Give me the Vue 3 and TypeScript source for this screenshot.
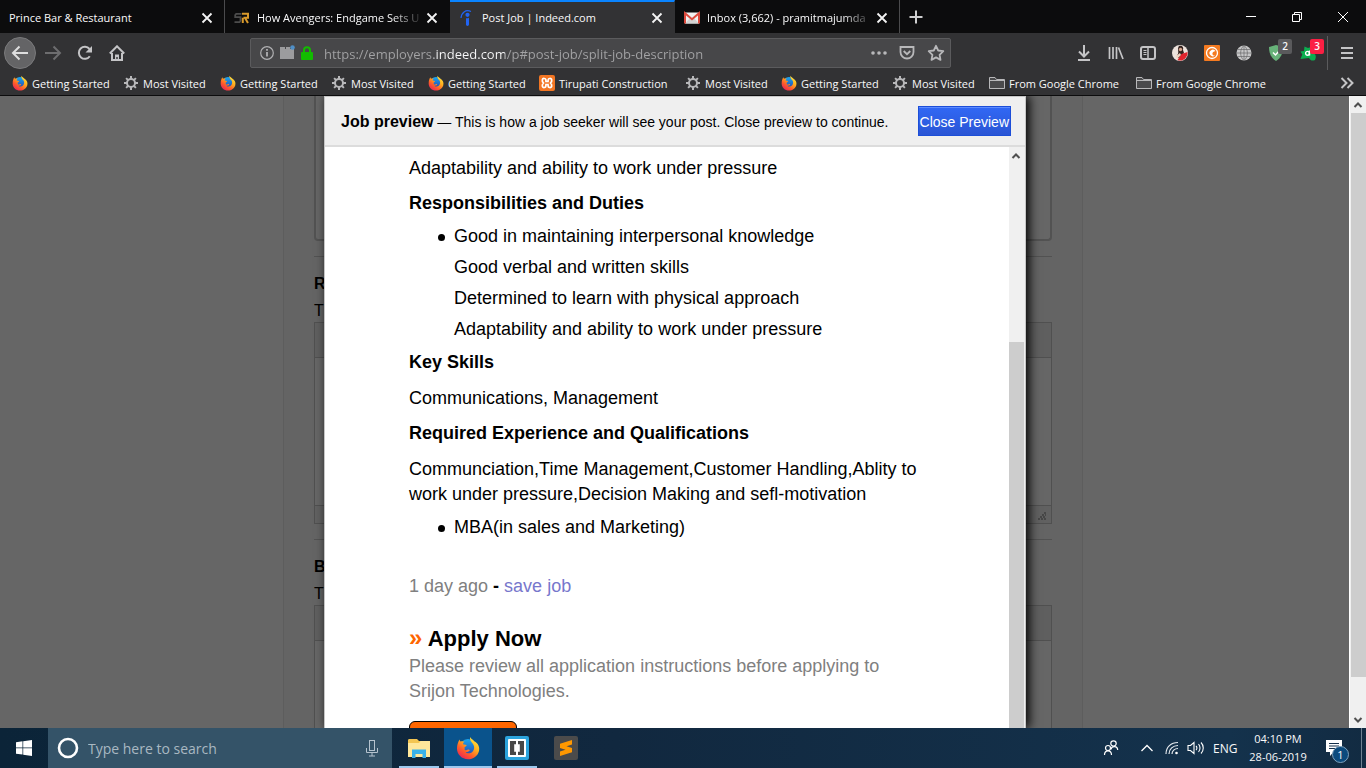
<script setup lang="ts">
import { ref } from 'vue'

interface Tab {
  title: string
  icon?: string
  active?: boolean
  fade?: boolean
}

interface Bookmark {
  label: string
  icon: string
}

interface Task {
  name: string
  icon: string
  state: 'idle' | 'open' | 'current'
}

const tabs: Tab[] = [
  { title: 'Prince Bar & Restaurant' },
  { title: 'How Avengers: Endgame Sets U', icon: 'i-sr', fade: true },
  { title: 'Post Job | Indeed.com', icon: 'i-indeed', active: true },
  { title: 'Inbox (3,662) - pramitmajumda', icon: 'i-gmail', fade: true },
]

const bookmarks: Bookmark[] = [
  { label: 'Getting Started', icon: 'i-firefox' },
  { label: 'Most Visited', icon: 'i-gear' },
  { label: 'Getting Started', icon: 'i-firefox' },
  { label: 'Most Visited', icon: 'i-gear' },
  { label: 'Getting Started', icon: 'i-firefox' },
  { label: 'Tirupati Construction', icon: 'i-xampp' },
  { label: 'Most Visited', icon: 'i-gear' },
  { label: 'Getting Started', icon: 'i-firefox' },
  { label: 'Most Visited', icon: 'i-gear' },
  { label: 'From Google Chrome', icon: 'i-folder' },
  { label: 'From Google Chrome', icon: 'i-folder' },
]

const tasks: Task[] = [
  { name: 'File Explorer', icon: 'i-explorer', state: 'open' },
  { name: 'Firefox', icon: 'i-firefox', state: 'current' },
  { name: 'Brackets', icon: 'i-brackets', state: 'open' },
  { name: 'Sublime Text', icon: 'i-sublime', state: 'idle' },
]

const duties: string[] = [
  'Good in maintaining interpersonal knowledge',
  'Good verbal and written skills',
  'Determined to learn with physical approach',
  'Adaptability and ability to work under pressure',
]

const address = ref('https://employers.indeed.com/p#post-job/split-job-description')
const search = ref('')
</script>

<template>
  <div class="screen">
    <svg class="sprite" width="0" height="0" aria-hidden="true">
      <defs>
        <linearGradient id="g-fox" x1="0.9" y1="0" x2="0.2" y2="1">
          <stop offset="0" stop-color="#fff14a" />
          <stop offset="0.4" stop-color="#ffb01e" />
          <stop offset="0.7" stop-color="#ff5a2a" />
          <stop offset="1" stop-color="#e6205e" />
        </linearGradient>
        <linearGradient id="g-globe" x1="0" y1="0" x2="0" y2="1">
          <stop offset="0" stop-color="#19a7f0" />
          <stop offset="1" stop-color="#2a3fa8" />
        </linearGradient>
      </defs>
      <symbol id="i-firefox" viewBox="0 0 24 24">
        <circle cx="12" cy="12" r="9" fill="url(#g-globe)" />
        <path fill="url(#g-fox)" d="M14 1c1 1.700 3 2.600 4.200 4.200C22 7 24 11 23 15c-1.200 5-5.800 8.300-11 8.300C5.800 23.300 1 18.600 1 12.600 1 9 2 6 3.500 3.500c.3 1 .6 1.500 1 2C6 5 7.200 5 8.500 5.800c-1 .6-1.500 1.500-1.500 2.500l3.500.6c.3 1-1 1.600-2 2.300.2 1 .2 1.800.1 2.500.9.800 1.900.6 2.900.1 1-.4 2-.2 2.300.5-.8 1.500-2.500 2-4.300 1.700 1.600 1.800 5 1.700 7-.3 2-2 2.300-5.200.5-7.700C15.500 6 13.400 4 14 1z" />
      </symbol>
      <symbol id="i-gear" viewBox="0 0 16 16">
        <g stroke="#b8b8ba" stroke-width="2">
          <path d="M8 1v3M8 12v3M1 8h3M12 8h3M3.100 3.100l2 2M10.900 10.900l2 2M12.900 3.100l-2 2M5.100 10.900l-2 2" />
          <circle cx="8" cy="8" r="4" fill="none" />
        </g>
      </symbol>
      <symbol id="i-xampp" viewBox="0 0 16 16">
        <rect width="16" height="16" rx="2" fill="#f37623" />
        <path d="M5.500 3.500C3 3 2.500 6 4.500 8c-2 2-1.500 5 1 4.500 1.500 0 1.500-1.500 1.500-3h2c0 1.500 0 3 1.500 3 2.500.5 3-2.500 1-4.500 2-2 1.500-5-1-4.500C9 3.500 9 5 9 6.500H7c0-1.500 0-3-1.500-3z" fill="none" stroke="#fff" stroke-width="1.700" />
      </symbol>
      <symbol id="i-folder" viewBox="0 0 16 16">
        <path d="M.5 13.500v-11h5.500l1.500 2h8v9z" fill="#4a4a4c" stroke="#b8b8ba" />
        <path d="M.5 5.500h15" stroke="#b8b8ba" />
      </symbol>
      <symbol id="i-sr" viewBox="0 0 16 16">
        <path d="M7.500 3.800H2.200L1.200 5v2.200h5.300v3.600l-1 1.400H.5" fill="none" stroke="#4c4c4c" stroke-width="1.800" />
        <path d="M8 3.800h6v4H9.500M8.800 13V7.800M11 8l3 5" fill="none" stroke="#d99a2b" stroke-width="2" />
      </symbol>
      <symbol id="i-indeed" viewBox="0 0 16 16">
        <circle cx="8.500" cy="4.800" r="2.100" fill="#2164f3" />
        <path d="M7 8.200c1.200.3 2 .1 3-.4V14.500c0 1.900-3 1.900-3 0z" fill="#2164f3" />
        <path d="M2 8C2.300 3 6.500-1 12 1.500" fill="none" stroke="#2164f3" stroke-width="1.200" />
      </symbol>
      <symbol id="i-gmail" viewBox="0 0 16 16">
        <path d="M1 2.500h14v11H1z" fill="#f1f1f1" />
        <path d="M1 13.500L6 8l2 1.500L10 8l5 5.500z" fill="#d4d4d4" />
        <path d="M1 13.500V3.200l7 6 7-6v10.300" fill="none" stroke="#dc4a3d" stroke-width="2" />
      </symbol>
      <symbol id="i-explorer" viewBox="0 0 24 24">
        <path d="M1 4.500C1 3.500 1.500 3 2.500 3H10l2 2h10v16H1z" fill="#f3c552" />
        <path d="M1 7h11l1.500-2H23v16H1z" fill="#ffe79b" />
        <path d="M5 22v-8.500h14V22h-3.500v-4h-7v4z" fill="#38b1ea" />
      </symbol>
      <symbol id="i-brackets" viewBox="0 0 24 24">
        <rect width="24" height="24" rx="2" fill="#2ba3dd" />
        <rect x="3" y="3" width="18" height="18" rx="1" fill="#fff" />
        <path d="M11 5v3.200H9.200v7.600H11V19H5V5zM13 5v3.200h1.800v7.600H13V19h6V5z" fill="#474747" />
      </symbol>
      <symbol id="i-sublime" viewBox="0 0 24 24">
        <rect width="24" height="24" rx="2" fill="#4b4b4b" />
        <path d="M18 4v4.500l-5.500 1.800 5.500 1.800v4.200L6 20v-4.500l5.500-1.800L6 11.900V7.700z" fill="#ff9800" />
      </symbol>
    </svg>

    <header class="browser">
      <div class="tabstrip">
        <div v-for="tab in tabs" :key="tab.title" class="tab" :class="{ active: tab.active }">
          <svg v-if="tab.icon" class="ico16"><use :href="`#${tab.icon}`" /></svg>
          <span class="tab-title" :class="{ fade: tab.fade }">{{ tab.title }}</span>
          <button class="tab-close" type="button" aria-label="Close tab">
            <svg width="12" height="12" viewBox="0 0 12 12"><path d="M1.500 1.500l9 9M10.500 1.500l-9 9" stroke="#f4f4f4" stroke-width="1.800" /></svg>
          </button>
        </div>
        <button class="new-tab" type="button" aria-label="New tab">
          <svg width="16" height="16" viewBox="0 0 16 16"><path d="M8 1.500v13M1.500 8h13" stroke="#cfcfd0" stroke-width="2" /></svg>
        </button>
        <div class="window-buttons">
          <button type="button" aria-label="Minimize"><svg width="12" height="12" viewBox="0 0 12 12"><path d="M1 5.500h10" stroke="#fff" /></svg></button>
          <button type="button" aria-label="Restore"><svg width="12" height="12" viewBox="0 0 12 12" fill="none" stroke="#fff"><path d="M1.500 3.500h7v7h-7zM3.500 3.500v-2h7v7h-2" /></svg></button>
          <button type="button" aria-label="Close"><svg width="12" height="12" viewBox="0 0 12 12"><path d="M1 1l10 10M11 1L1 11" stroke="#fff" /></svg></button>
        </div>
      </div>

      <div class="toolbar">
        <nav class="nav-buttons">
          <button class="back" type="button" aria-label="Back">
            <svg width="18" height="18" viewBox="0 0 18 18"><path d="M17 9H2M8.500 2.500L2 9l6.500 6.500" fill="none" stroke="#dededf" stroke-width="2" /></svg>
          </button>
          <button type="button" aria-label="Forward">
            <svg width="18" height="18" viewBox="0 0 18 18"><path d="M1 9h15M9.500 2.500L16 9l-6.500 6.500" fill="none" stroke="#6d6d6f" stroke-width="2" /></svg>
          </button>
          <button type="button" aria-label="Reload">
            <svg width="16" height="16" viewBox="0 0 16 16"><path d="M12.800 11.200A6 6 0 1 1 12.500 4" fill="none" stroke="#c4c4c6" stroke-width="2" /><path d="M15 1v6.500H8.500z" fill="#c4c4c6" /></svg>
          </button>
          <button type="button" aria-label="Home">
            <svg width="16" height="16" viewBox="0 0 16 16"><path d="M.8 8.500L8 1.300l7.200 7.200M3 8v7h10V8" fill="none" stroke="#c4c4c6" stroke-width="2" /><path d="M6 15V9.500h4V15H8.700v-3H7.300v3z" fill="#c4c4c6" /></svg>
          </button>
        </nav>

        <div class="urlbar">
          <svg width="16" height="16" viewBox="0 0 16 16"><circle cx="8" cy="8" r="6.300" fill="none" stroke="#b0b0b2" stroke-width="1.200" /><path d="M8 7v4.500M8 4v1.700" stroke="#b0b0b2" stroke-width="1.800" /></svg>
          <svg width="16" height="16" viewBox="0 0 16 16"><path d="M1 2h5v2H1zM7 2h4v2H7zM1 4h14v10H1z" fill="#9c9c9e" /><circle cx="13.500" cy="2.500" r="2.300" fill="#4f8fc7" /></svg>
          <svg width="16" height="16" viewBox="0 0 16 16"><path d="M5 8V5.200a3 3 0 0 1 6 0V8" fill="none" stroke="#12bc00" stroke-width="2" /><rect x="2" y="7" width="12" height="8" rx="1" fill="#12bc00" /></svg>
          <input v-model="address" class="address" type="text" aria-label="Address" spellcheck="false" />
          <svg width="16" height="16" viewBox="0 0 16 16" fill="#b8b8ba"><circle cx="2" cy="8" r="1.800" /><circle cx="8" cy="8" r="1.800" /><circle cx="14" cy="8" r="1.800" /></svg>
          <svg width="16" height="16" viewBox="0 0 16 16" fill="none" stroke="#b8b8ba" stroke-width="1.800"><path d="M1.500 2h13v5a6.500 6.500 0 0 1-13 0zM4.700 6L8 9.200 11.300 6" /></svg>
          <svg width="18" height="18" viewBox="0 0 18 18"><path d="M9 1.800l2.200 4.700 5.100.7-3.700 3.600.9 5.100L9 13.400l-4.500 2.500.9-5.100L1.700 7.200l5.100-.7z" fill="none" stroke="#b8b8ba" stroke-width="1.800" stroke-linejoin="round" /></svg>
        </div>

        <div class="extensions">
          <button type="button" aria-label="Downloads"><svg width="16" height="16" viewBox="0 0 16 16"><path d="M8 0v11M3 6.500l5 5 5-5M2 15h12" fill="none" stroke="#c4c4c6" stroke-width="2" /></svg></button>
          <button type="button" aria-label="Library"><svg width="16" height="16" viewBox="0 0 16 16"><path d="M1.500 2v12M5 2v12M8.500 2v12M10.500 2.500l4.500 11.500" stroke="#c4c4c6" stroke-width="1.700" /></svg></button>
          <button type="button" aria-label="Sidebars"><svg width="16" height="16" viewBox="0 0 16 16" fill="none" stroke="#c4c4c6"><rect x="1" y="2" width="14" height="12" rx="2" stroke-width="2" /><path d="M8 2v12" stroke-width="1.500" /><path d="M3.500 5.500h3M3.500 7.500h3M3.500 9.500h3" /></svg></button>
          <button type="button" aria-label="Account"><svg width="16" height="16" viewBox="0 0 16 16"><circle cx="8" cy="8" r="8" fill="#ece2dc" /><path d="M7 1c3-1 5 1 4 4l1 3-5 5C5 13 4 11 6 9c1-3-1-5 1-8z" fill="#33231f" /><circle cx="8.500" cy="4.500" r="1.700" fill="#d6a58d" /><path d="M5.500 15l4-6 6-2c.8 5-5 10.500-10 8z" fill="#e0242d" /><path d="M4 11l4-3 1 2-4 4z" fill="#f1d4c2" /></svg></button>
          <button type="button" aria-label="Capture"><svg width="16" height="16" viewBox="0 0 16 16"><rect width="16" height="16" rx="1" fill="#f47a20" /><circle cx="8" cy="8" r="5.500" fill="none" stroke="#fff" stroke-width="1.300" /><path d="M11.500 6A3.300 3.300 0 1 0 11 10.500C8 11 7 7 11.500 6z" fill="#fff" /></svg></button>
          <button type="button" aria-label="Globe"><svg width="16" height="16" viewBox="0 0 16 16"><circle cx="8" cy="8" r="7.500" fill="#c6c6c7" /><path d="M0 8h16M1.500 4.500h13M1.500 11.500h13M8 0v16M8 .5C3.500 4 3.500 12 8 15.500M8 .5c4.500 3.500 4.500 11.500 0 15" fill="none" stroke="#68686a" stroke-width=".7" /></svg></button>
          <button class="badged" type="button" aria-label="Ad blocker"><svg width="16" height="16" viewBox="0 0 16 16"><path d="M8 0l7 2c0 6-2 11-7 14C3 13 1 8 1 2z" fill="#67b279" /><path d="M5 7.500L7.500 10l4-4.500" fill="none" stroke="#fff" stroke-width="1.500" /></svg><span class="badge">2</span></button>
          <button class="badged" type="button" aria-label="Online security"><svg width="16" height="16" viewBox="0 0 16 16"><path d="M4.500 1.500L8 3l3-1 2 6c3 1 3.500 4 2 7-3 1.500-5 0-6-2L.5 14l1.800-4.500L.5 6.500l3.500-.5z" fill="#0aae4f" /><path d="M9.500 5.500v5" stroke="#fff" stroke-width="1.500" /><circle cx="7.500" cy="8.300" r="1.900" fill="none" stroke="#fff" stroke-width="1.400" /></svg><span class="badge alert">3</span></button>
          <button class="menu" type="button" aria-label="Menu"><svg width="16" height="16" viewBox="0 0 16 16"><path d="M2 3h12M2 8h12M2 13h12" stroke="#c4c4c6" stroke-width="2" /></svg></button>
        </div>
      </div>

      <nav class="bookmarks">
        <a v-for="(mark, i) in bookmarks" :key="i" href="#">
          <svg class="ico16"><use :href="`#${mark.icon}`" /></svg>
          <span>{{ mark.label }}</span>
        </a>
        <button class="more" type="button" aria-label="More bookmarks">
          <svg width="14" height="12" viewBox="0 0 14 12"><path d="M1.500 1l5 5-5 5M7.500 1l5 5-5 5" fill="none" stroke="#c4c4c6" stroke-width="2" /></svg>
        </button>
      </nav>
    </header>

    <main class="viewport">
      <div class="page">
        <div class="page-inner">
          <div class="field"></div>
          <section class="block">
            <h2>R</h2>
            <p>T</p>
            <div class="editor">
              <div class="editor-tools"></div>
              <div class="editor-text"></div>
              <div class="editor-status">
                <svg width="8" height="8" viewBox="0 0 8 8"><path d="M6 1h2M4 3h4M2 5h6M0 7h8" stroke="#2e2e2e" stroke-dasharray="2 1" /></svg>
              </div>
            </div>
          </section>
          <section class="block">
            <h2>B</h2>
            <p>T</p>
            <div class="editor">
              <div class="editor-tools"></div>
              <div class="editor-text"></div>
            </div>
          </section>
        </div>
      </div>

      <div class="overlay">
        <div class="dialog" role="dialog" aria-label="Job preview">
          <div class="dialog-head">
            <p><b>Job preview</b> — This is how a job seeker will see your post. Close preview to continue.</p>
            <button class="close-preview" type="button">Close Preview</button>
          </div>
          <div class="dialog-body">
            <article class="job">
              <p>Adaptability and ability to work under pressure</p>
              <h3>Responsibilities and Duties</h3>
              <ul>
                <li v-for="(duty, i) in duties" :key="duty" :class="{ bullet: i === 0 }">{{ duty }}</li>
              </ul>
              <h3>Key Skills</h3>
              <p>Communications, Management</p>
              <h3>Required Experience and Qualifications</h3>
              <p>Communciation,Time Management,Customer Handling,Ablity to work under pressure,Decision Making and sefl-motivation</p>
              <ul>
                <li class="bullet">MBA(in sales and Marketing)</li>
              </ul>
              <p class="posted"><span>1 day ago</span> <b>-</b> <a href="#">save job</a></p>
              <h2><span>»</span> Apply Now</h2>
              <p class="note">Please review all application instructions before applying to Srijon Technologies.</p>
              <button class="apply" type="button" aria-label="Apply"></button>
            </article>
            <div class="scrollbar inner-bar">
              <svg width="10" height="8" viewBox="0 0 10 8"><path d="M1.500 6L5 2.500 8.500 6" fill="none" stroke="#505050" stroke-width="2" /></svg>
              <div class="thumb"></div>
            </div>
          </div>
        </div>
      </div>

      <div class="scrollbar page-bar">
        <svg width="10" height="8" viewBox="0 0 10 8"><path d="M1.500 6L5 2.500 8.500 6" fill="none" stroke="#505050" stroke-width="2" /></svg>
        <div class="thumb"></div>
        <svg width="10" height="8" viewBox="0 0 10 8"><path d="M1.500 2L5 5.500 8.500 2" fill="none" stroke="#505050" stroke-width="2" /></svg>
      </div>
    </main>

    <footer class="taskbar">
      <button class="start" type="button" aria-label="Start">
        <svg width="16" height="16" viewBox="0 0 16 16" fill="#fff"><path d="M0 2.200l6.500-.9v6.200H0zM7.200 1.200L16 0v7.500H7.200zM0 8.300h6.500v6.300L0 13.700zM7.200 8.300H16V16l-8.800-1.300z" /></svg>
      </button>
      <label class="search">
        <svg width="22" height="22" viewBox="0 0 22 22"><circle cx="11" cy="11" r="9" fill="none" stroke="#fff" stroke-width="2.600" /></svg>
        <input v-model="search" type="text" placeholder="Type here to search" aria-label="Search" />
        <svg width="12" height="17" viewBox="0 0 12 17" fill="none" stroke="#b5c3ce"><rect x="3.500" y=".5" width="5" height="10" /><path d="M.5 8v4.500h11V8M6 12.500v3.500M3 16h6" /></svg>
      </label>
      <div class="tasks">
        <button v-for="task in tasks" :key="task.name" type="button" :class="task.state" :aria-label="task.name">
          <svg class="ico24"><use :href="`#${task.icon}`" /></svg>
        </button>
      </div>
      <div class="tray">
        <button class="people" type="button" aria-label="People">
          <svg width="16" height="16" viewBox="0 0 16 16" fill="none" stroke="#fff" stroke-width="1.200"><circle cx="10.500" cy="3.500" r="2.700" /><path d="M8 9.500c.5-4 6.500-4 6.700.5" /><circle cx="5" cy="8" r="2.500" /><path d="M1.500 15c0-5.500 7-5.500 7 0" /></svg>
        </button>
        <button class="up" type="button" aria-label="Show hidden icons">
          <svg width="14" height="8" viewBox="0 0 14 8"><path d="M1.500 7L7 1.500 12.500 7" fill="none" stroke="#fff" stroke-width="1.300" /></svg>
        </button>
        <button class="wifi" type="button" aria-label="Network">
          <svg width="14" height="14" viewBox="0 0 14 14" fill="none" stroke="#e4e9ee" stroke-width="1.200"><path d="M1 13C1 6 6 1.500 13 1.500M4 13c0-5 4-8.500 9-8.500M7 13c0-3 2.500-5.500 6-5.500" /><circle cx="11.500" cy="12" r="1.300" fill="#fff" stroke="none" /></svg>
        </button>
        <button class="sound" type="button" aria-label="Volume">
          <svg width="18" height="14" viewBox="0 0 18 14" fill="none" stroke="#fff" stroke-width="1.100"><path d="M1 4.500h2.500L7 1.500v11L3.500 9.500H1zM9 5c1.200 1 1.200 3 0 4M11.500 3.200c2 2 2 5.600 0 7.600M14 1.500c3 3 3 8 0 11" /></svg>
        </button>
        <span class="lang">ENG</span>
        <div class="clock"><span>04:10 PM</span><span>28-06-2019</span></div>
        <button class="notice" type="button" aria-label="Notifications">
          <svg width="17" height="17" viewBox="0 0 17 17"><path d="M0 0h16v12H7.500L4 16v-4H0z" fill="#fff" /><path d="M3 3.500h10M3 6h10M3 8.500h6" stroke="#16304a" /></svg>
          <span class="count">1</span>
        </button>
      </div>
    </footer>
  </div>
</template>

<style>
html,
body {
  margin: 0;
  overflow: hidden;
}
</style>

<style scoped>
.screen {
  display: flex;
  flex-direction: column;
  height: 100vh;
  overflow: hidden;
  font-family: "Open Sans", "Noto Sans", sans-serif;
  color: #f9f9fa;
}
.screen * {
  box-sizing: border-box;
}
.sprite {
  position: absolute;
}
svg {
  flex: none;
  display: block;
}
.ico16 {
  width: 16px;
  height: 16px;
}
.ico24 {
  width: 24px;
  height: 24px;
}
button {
  display: flex;
  align-items: center;
  justify-content: center;
  flex: none;
  margin: 0;
  padding: 0;
  border: 0;
  background: none;
  color: inherit;
  font: inherit;
}

.browser {
  flex: none;
  background: #323234;
  border-bottom: 1px solid #0c0c0d;
}
.tabstrip {
  display: flex;
  height: 33px;
  background: #0c0c0d;
}
.tab {
  display: flex;
  align-items: center;
  gap: 7px;
  flex: 0 1 225px;
  min-width: 0;
  padding: 2px 9px 0;
  border-right: 1px solid #4b4b4d;
  font-size: 11px;
}
.tab.active {
  padding-top: 0;
  border-top: 2px solid #0a84ff;
  border-right-color: #323234;
  background: #323234;
}
.tab:has(+ .active) {
  border-right-color: #0c0c0d;
}
.tab-title {
  flex: 1;
  white-space: nowrap;
}
.tab-title.fade {
  min-width: 0;
  margin-right: -7px;
  mask-image: linear-gradient(to left, transparent 0, #000 32px);
}
.tab-close {
  width: 16px;
  height: 16px;
}
.new-tab {
  width: 32px;
}
.window-buttons {
  display: flex;
  margin-left: auto;
}
.window-buttons button {
  width: 46px;
}

.toolbar {
  display: flex;
  align-items: center;
  height: 40px;
}
.nav-buttons {
  display: flex;
  flex: 0 0 250px;
  padding-left: 4px;
}
.nav-buttons button {
  width: 32px;
  height: 32px;
}
.nav-buttons .back {
  margin-right: 1px;
  border: 1px solid #7a7a7c;
  border-radius: 50%;
  background: #646466;
}
.urlbar {
  display: flex;
  align-items: center;
  gap: 4px;
  flex: 1;
  min-width: 0;
  height: 30px;
  margin-right: 117px;
  padding: 0 5px 0 8px;
  border: 1px solid #5b5b5d;
  border-radius: 2px;
  background: #474749;
}
.urlbar svg:nth-last-child(-n + 2) {
  margin-left: 8px;
}
.address {
  flex: 1;
  min-width: 0;
  height: 28px;
  margin-left: 5px;
  padding: 2px 0 0;
  border: 0;
  outline: 0;
  background: linear-gradient(90deg, #a3a3a5 0 110px, #f9f9fa 110px 181px, #a3a3a5 181px);
  background-clip: text;
  -webkit-text-fill-color: transparent;
  font: 13px "Open Sans", "Noto Sans", sans-serif;
}
.extensions {
  display: flex;
  align-items: center;
  flex: none;
}
.extensions button {
  width: 32px;
  height: 34px;
}
.badged {
  position: relative;
}
.badge {
  position: absolute;
  top: 3px;
  right: 0;
  width: 14px;
  border-radius: 2px;
  background: #5a5a5c;
  font-size: 10px;
  font-weight: 600;
  line-height: 15px;
  text-align: center;
}
.badge.alert {
  background: #fb1f43;
}
.extensions .menu {
  width: 39px;
  margin-left: 3px;
  border-left: 1px solid #5b5b5d;
}

.bookmarks {
  display: grid;
  grid-template-columns: 111px 97px 111px 97px 111px 146px 96px 111px 97px 147px 147px 1fr;
  align-items: center;
  height: 22px;
  padding: 0 12px 2px;
  font-size: 11px;
}
.bookmarks a {
  display: flex;
  align-items: center;
  gap: 4px;
  color: inherit;
  text-decoration: none;
  white-space: nowrap;
}
.more {
  justify-self: end;
}

.viewport {
  display: grid;
  grid-template: minmax(0, 1fr) / minmax(0, 1fr);
  flex: 1;
  min-height: 0;
  background: #666;
  font-family: "Liberation Sans", Arial, sans-serif;
  color: #000;
}
.viewport > * {
  grid-area: 1 / 1;
}
.page {
  justify-self: center;
  width: 800px;
  padding: 0 30px;
  overflow: hidden;
  border: solid #5d5d5d;
  border-width: 0 1px;
  background: #646464;
}
.page-inner {
  display: flex;
  flex-direction: column;
  gap: 15px;
}
.field {
  height: 145px;
  border: 2px solid #525252;
  border-top: 0;
  border-radius: 0 0 4px 4px;
  background: #666;
}
.block {
  border-top: 1px solid #525252;
  padding-top: 14px;
}
.block h2,
.block p {
  margin: 0;
  font-size: 16px;
  line-height: 25px;
}
.block p {
  padding-top: 3px;
  line-height: 23px;
}
.editor {
  border: 1px solid #505050;
  background: #666;
}
.editor-tools {
  height: 35px;
  border-bottom: 1px solid #505050;
  background: #5f5f5f;
}
.editor-text {
  height: 147px;
}
.editor-status {
  display: flex;
  align-items: center;
  justify-content: flex-end;
  height: 18px;
  padding: 2px 5px 0;
  border-top: 1px solid #505050;
  background: #616161;
}

.overlay {
  display: flex;
  justify-content: center;
  margin-right: 16px;
  overflow: hidden;
}
.dialog {
  display: flex;
  flex-direction: column;
  width: 702px;
  border: solid #c6c6c6;
  border-width: 1px 1px 0;
  background: #fff;
  box-shadow: 3px 0 10px #000;
}
.dialog-head {
  display: flex;
  align-items: center;
  justify-content: space-between;
  flex: none;
  height: 50px;
  padding: 0 14px 0 16px;
  border-bottom: 2px solid #dcdcdc;
  background: #efefef;
  font-size: 14px;
}
.dialog-head p {
  margin: 0;
  padding-top: 2px;
}
.dialog-head b {
  font-size: 16px;
}
.close-preview {
  height: 30px;
  padding: 2px 1px 0;
  border: 1px solid #1c4ed8;
  background: linear-gradient(#3168f5, #2a55d4);
  box-shadow: inset 0 1px #5c8bff;
  color: #fff;
  font-size: 14px;
}
.dialog-body {
  display: flex;
  flex: 1;
  min-height: 0;
}
.job {
  flex: 1;
  min-width: 0;
  padding: 9px 84px 0;
  overflow: hidden;
  font-size: 18px;
  line-height: 25px;
}
.job p,
.job h3,
.job ul,
.job h2 {
  margin: 0;
}
.job h3 {
  margin: 10px 0;
  font-size: 18px;
}
.job ul {
  display: flex;
  flex-direction: column;
  gap: 6px;
  margin: 8px 0;
  padding-left: 45px;
  list-style: none;
}
.job h3 + ul {
  margin-top: -2px;
}
.job ul + h3 {
  margin-top: 0;
}
.job h3 + p {
  padding-top: 1px;
}
.job li.bullet {
  display: flex;
}
.job li.bullet::before {
  content: "";
  flex: none;
  width: 7px;
  height: 7px;
  margin: 10px 9px 0 -16px;
  border-radius: 50%;
  background: #000;
}
.job .posted {
  margin-top: 34px;
  color: #000;
}
.posted span {
  color: #808080;
}
.posted a {
  color: #7777cc;
  text-decoration: none;
}
.job h2 {
  margin-top: 25px;
  font-size: 22px;
  line-height: 30px;
}
.job h2 span {
  color: #ff6600;
  font-size: 24px;
  line-height: 24px;
}
.job .note {
  color: #808080;
}
.apply {
  width: 108px;
  height: 36px;
  margin-top: 17px;
  border: 1px solid #000;
  border-radius: 6px;
  background: #ff6600;
}

.scrollbar {
  display: flex;
  flex-direction: column;
  align-items: center;
  background: #f0f0f0;
}
.scrollbar .thumb {
  width: 15px;
  background: #cdcdcd;
}
.inner-bar {
  flex: 0 0 16px;
  align-items: flex-start;
  padding-top: 5px;
}
.inner-bar svg {
  margin-left: 2px;
}
.inner-bar .thumb {
  flex: 1;
  margin-top: 182px;
}
.page-bar {
  justify-self: end;
  width: 17px;
  padding: 5px 0 4px;
  border-left: 1px solid #fff;
}
.page-bar .thumb {
  flex: 1;
  margin: 4px 0 39px;
}

.taskbar {
  display: flex;
  flex: none;
  height: 40px;
  background: linear-gradient(90deg, #0b2438, #11283f 45%, #14324c 90%, #122b42);
}
.start {
  width: 48px;
}
.search {
  display: flex;
  align-items: center;
  flex: 0 0 344px;
  padding: 0 14px 0 9px;
  background: #345368;
}
.search input {
  flex: 1;
  min-width: 0;
  padding: 0 9px;
  border: 0;
  outline: 0;
  background: none;
  color: #fff;
  font: 14px "Open Sans", "Noto Sans", sans-serif;
}
.search input::placeholder {
  color: #a9b8c2;
  opacity: 1;
}
.tasks {
  display: flex;
  gap: 1px;
  margin-left: 3px;
}
.tasks button {
  width: 48px;
  background: linear-gradient(#9cc8ee, #9cc8ee) bottom / 40px 2px no-repeat;
}
.tasks .idle {
  background: none;
}
.tasks .current {
  background: linear-gradient(#9cc8ee, #9cc8ee) bottom / 48px 2px no-repeat #0a538c;
}
.tray {
  display: flex;
  align-items: center;
  margin-left: auto;
  margin-right: 4px;
  border-right: 1px solid #6f8292;
  font-size: 12px;
}
.people {
  width: 48px;
}
.up {
  width: 24px;
}
.wifi {
  width: 26px;
}
.sound {
  width: 22px;
}
.lang {
  width: 32px;
  margin-left: 6px;
}
.clock {
  display: flex;
  flex-direction: column;
  align-items: center;
  width: 66px;
  font-size: 11px;
  line-height: 18px;
}
.notice {
  position: relative;
  width: 50px;
  padding-right: 4px;
}
.count {
  position: absolute;
  top: 6px;
  right: 12px;
  width: 17px;
  height: 17px;
  border: 1px solid #7fa2bd;
  border-radius: 50%;
  background: #0b4a7d;
  font-size: 11px;
  line-height: 15px;
  text-align: center;
}
</style>
